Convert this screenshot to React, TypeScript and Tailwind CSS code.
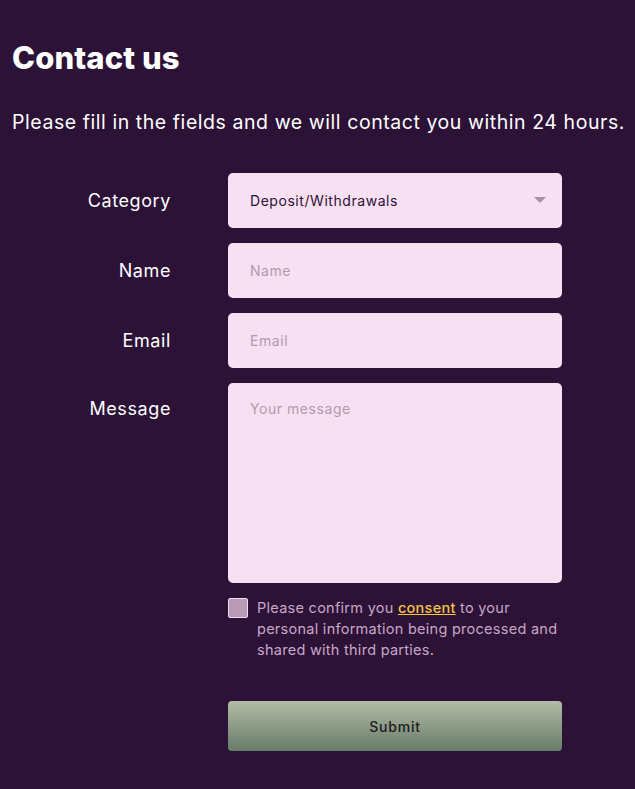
import { useState } from 'react'

export default function App() {
  const [category, setCategory] = useState('Deposit/Withdrawals')
  const [agreed, setAgreed] = useState(false)

  return (
    <div className="min-h-screen w-full bg-[#2c1236] font-['Inter','Noto_Sans',sans-serif] text-white">
      <div className="px-3 pt-[40px]">
        <h1 className="text-[31px] font-extrabold leading-[36px] tracking-[0.1px]">Contact us</h1>
        <p className="mt-[32px] whitespace-nowrap text-[19.5px] leading-[28px] tracking-[0.56px]">
          Please fill in the fields and we will contact you within 24 hours.
        </p>
      </div>

      <form className="mt-[37px] grid grid-cols-[171px_334px] gap-x-[57px] gap-y-[15px]" onSubmit={e => e.preventDefault()}>
        <label className="flex h-[55px] items-center justify-end text-[18px] tracking-[0.6px]">Category</label>
        <div className="relative">
          <select
            value={category}
            onChange={e => setCategory(e.target.value)}
            className="h-[55px] w-full appearance-none rounded-[5px] bg-[#f8e0f3] px-[22px] text-[14px] tracking-[0.55px] text-[#2c1236] outline-none"
          >
            <option>Deposit/Withdrawals</option>
            <option>Account</option>
            <option>Other</option>
          </select>
          <span className="pointer-events-none absolute right-[16px] top-[24px] h-0 w-0 border-x-[6px] border-t-[6px] border-x-transparent border-t-[#a892a3]" />
        </div>

        <label className="flex h-[55px] items-center justify-end text-[18px] tracking-[0.6px]">Name</label>
        <input
          placeholder="Name"
          className="h-[55px] w-full rounded-[5px] bg-[#f8e0f3] px-[22px] text-[14px] tracking-[0.55px] text-[#2c1236] outline-none placeholder:text-[#b29aae]"
        />

        <label className="flex h-[55px] items-center justify-end text-[18px] tracking-[0.6px]">Email</label>
        <input
          placeholder="Email"
          className="h-[55px] w-full rounded-[5px] bg-[#f8e0f3] px-[22px] text-[14px] tracking-[0.55px] text-[#2c1236] outline-none placeholder:text-[#b29aae]"
        />

        <label className="flex justify-end pt-[13px] text-[18px] leading-[26px] tracking-[0.6px]">Message</label>
        <textarea
          placeholder="Your message"
          className="h-[200px] w-full resize-none rounded-[5px] bg-[#f8e0f3] px-[22px] py-[16px] text-[14px] leading-[20px] tracking-[0.55px] text-[#2c1236] outline-none placeholder:text-[#b29aae]"
        />

        <div />
        <div className="flex items-start gap-[9px]">
          <button
            type="button"
            onClick={() => setAgreed(!agreed)}
            className="h-[20px] w-[20px] shrink-0 rounded-[2px] border border-[#f0dcee] bg-[#b99bb5]"
          >
            {agreed && <span className="block text-center text-[13px] leading-[18px] text-[#2c1236]">✓</span>}
          </button>
          <p className="-mt-[1px] text-[14.5px] leading-[21px] tracking-[0.27px] text-[#c9a7c7]">
            Please confirm you{' '}
            <a href="#" className="font-medium text-[#f5c542] underline">consent</a> to your personal information being processed and shared with third parties.
          </p>
        </div>

        <div />
        <button
          type="submit"
          className="mt-[26px] h-[50px] w-full rounded-[4px] bg-gradient-to-b from-[#b3bca6] to-[#687c69] text-[14px] font-medium tracking-[0.8px] text-[#1f1a1f]"
        >
          Submit
        </button>
      </form>
    </div>
  )
}
